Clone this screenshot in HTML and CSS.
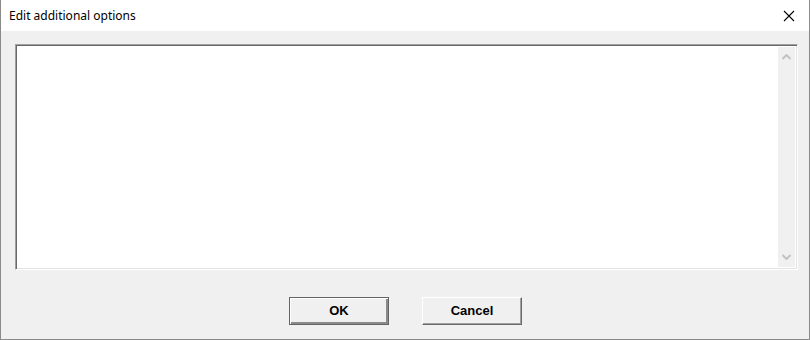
FILE: index.html
```html
<!DOCTYPE html>
<html lang="en">
<head>
    <meta charset="UTF-8">
    <title>Edit additional options</title>
    <link rel="stylesheet" href="styles.css">
</head>
<body>

    <div class="window">

        <div class="titlebar">
            <span class="title">Edit additional options</span>
            <span class="close">
                <svg width="12" height="12" viewBox="0 0 12 12">
                    <path d="M1 1 L11 11 M11 1 L1 11" stroke="#000" stroke-width="1.1" fill="none"/>
                </svg>
            </span>
        </div>

        <div class="content">
            <div class="editbox">
                <div class="textarea"></div>
                <div class="scrollbar">
                    <svg class="arrow" width="9" height="6" viewBox="0 0 9 6">
                        <path d="M0.5 5 L4.5 1 L8.5 5" stroke="#c2c2c2" stroke-width="2" fill="none"/>
                    </svg>
                    <svg class="arrow" width="9" height="6" viewBox="0 0 9 6">
                        <path d="M0.5 1 L4.5 5 L8.5 1" stroke="#c2c2c2" stroke-width="2" fill="none"/>
                    </svg>
                </div>
            </div>

            <div class="buttons">
                <button class="btn default">OK</button>
                <button class="btn">Cancel</button>
            </div>
        </div>

    </div>

</body>
</html>
```

FILE: styles.css
```css
body {
    margin: 0;
    width: 810px;
    height: 340px;
    overflow: hidden;
    background-color: #f0f0f0;
}

.window {
    box-sizing: border-box;
    width: 810px;
    height: 340px;
    border: 1px solid #8a8a8a;
    border-top: none;
    background-color: #f0f0f0;
    display: flex;
    flex-direction: column;
}

.titlebar {
    height: 31px;
    background-color: #fff;
    display: flex;
    align-items: center;
    justify-content: space-between;
    padding: 0 14px 0 8px;
    flex-shrink: 0;
}

.title {
    font-family: "Noto Sans", "Open Sans", sans-serif;
    font-size: 12px;
    color: #000;
    padding-bottom: 1px;
}

.close {
    display: flex;
    padding-top: 1px;
}

.content {
    padding: 13px 11px 0 14px;
}

.editbox {
    height: 226px;
    display: flex;
    background-color: #fff;
    border-top: 1px solid #a0a0a0;
    border-left: 1px solid #a0a0a0;
    border-right: 1px solid #fff;
    border-bottom: 1px solid #fff;
    box-shadow: inset 1px 1px 0 #696969, inset -1px -1px 0 #e3e3e3;
    padding: 2px 2px 2px 2px;
    box-sizing: border-box;
}

.textarea {
    flex: 1;
}

.scrollbar {
    width: 17px;
    background-color: #f0f0f0;
    display: flex;
    flex-direction: column;
    justify-content: space-between;
    align-items: center;
    padding: 7px 0 7px 0;
}

.buttons {
    display: flex;
    justify-content: center;
    gap: 33px;
    margin-top: 27px;
    padding-right: 2px;
}

.btn {
    box-sizing: border-box;
    width: 100px;
    height: 28px;
    font-family: "Liberation Sans", Arial, sans-serif;
    font-weight: bold;
    font-size: 13px;
    color: #000;
    background-color: #f0f0f0;
    border: none;
    border-top: 1px solid #fff;
    border-left: 1px solid #fff;
    border-right: 1px solid #696969;
    border-bottom: 1px solid #696969;
    box-shadow: inset -1px -1px 0 #a0a0a0;
    padding: 0 0 1px 0;
}

.btn.default {
    border: 1px solid #646464;
    box-shadow: inset 1px 1px 0 #fff, inset -2px -2px 0 #8a8a8a;
}
```
